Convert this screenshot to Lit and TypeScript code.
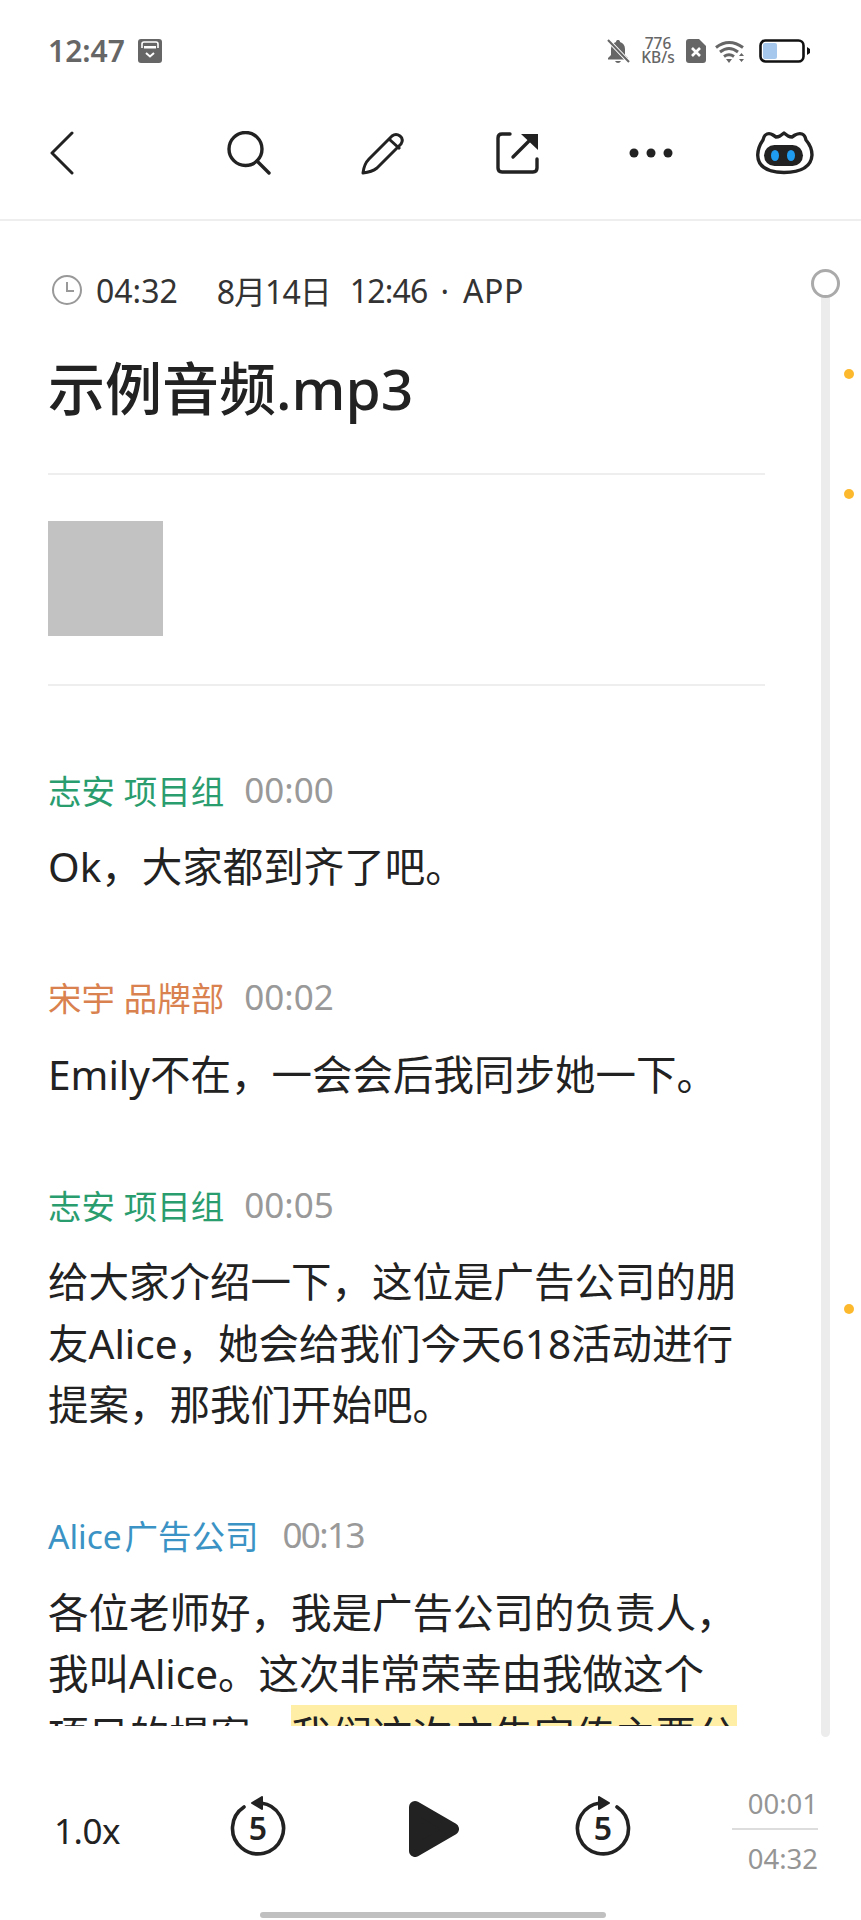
import {css, html, LitElement, svg} from "lit";
import {customElement} from "lit/decorators.js";

type Turn = {
  speaker: string
  time: string
  kind: string
  text: unknown
}

const TURNS: Turn[] = [
  {speaker: '志安 项目组', time: '00:00', kind: 'green', text: 'Ok，大家都到齐了吧。'},
  {speaker: '宋宇 品牌部', time: '00:02', kind: 'orange', text: 'Emily不在，一会会后我同步她一下。'},
  {
    speaker: '志安 项目组',
    time: '00:05',
    kind: 'green',
    text: html`给大家介绍一下，这位是广告公司的朋<br>友Alice，她会给我们今天618活动进行<br>提案，那我们开始吧。`,
  },
  {
    speaker: 'Alice 广告公司',
    time: '00:13',
    kind: 'blue',
    text: html`各位老师好，我是广告公司的负责人，<br>我叫Alice。这次非常荣幸由我做这个<br>项目的提案。<mark>我们这次广告宣传主要分</mark>`,
  },
]

const seekIcon = (flip: boolean) => svg`
  <g transform=${flip ? 'translate(56 0) scale(-1 1)' : 'translate(0 0)'}>
    <path d="M31 7A25.500 25.500 0 1 1 14 11" fill="none" stroke="#222" stroke-width="3.600" stroke-linecap="round"/>
    <path d="M22 7L32 1V13Z" fill="#222" stroke="#222" stroke-width="2" stroke-linejoin="round"/>
  </g>
`

@customElement('app-root')
export class AppRoot extends LitElement {

  static styles = css`
    :host {
      background: #fff;
      color: #222;
      display: block;
      font-family: "Noto Sans", "Noto Sans CJK SC", sans-serif;
      height: 1920px;
      overflow: hidden;
      position: relative;
      width: 861px;
    }

    svg {
      display: block;
    }

    .status {
      align-items: center;
      color: #666;
      display: flex;
      height: 101px;
      padding: 0 51px 0 48px;
    }

    .clock {
      font-size: 30px;
      font-weight: 600;
      line-height: 1;
      margin-right: 13px;
    }

    .status-right {
      align-items: center;
      display: flex;
      margin-left: auto;
    }

    .speed {
      font-size: 15.5px;
      font-weight: 500;
      line-height: 13.5px;
      margin: 0 11px 0 11px;
      text-align: center;
      width: 34px;
    }

    .toolbar {
      align-items: center;
      border-bottom: 2px solid #eee;
      box-sizing: border-box;
      display: grid;
      grid-template-columns: 182px repeat(5, 134px);
      height: 120px;
      padding-bottom: 14px;
    }

    .tool {
      display: flex;
      justify-content: center;
    }

    .back {
      justify-content: flex-start;
      padding-left: 50px;
    }

    .content {
      box-sizing: border-box;
      height: 1505px;
      overflow: hidden;
      padding: 0 96px 0 48px;
    }

    .meta {
      align-items: center;
      color: #333;
      display: flex;
      font-size: 32px;
      height: 40px;
      margin-top: 49px;
      padding-left: 4px;
      white-space: pre;
    }

    .meta svg {
      margin-right: 14px;
    }

    .date {
      letter-spacing: -1px;
      margin-left: 39px;
    }

    .hour {
      letter-spacing: -0.8px;
      margin-left: 19px;
    }

    .sep {
      margin-left: 13px;
    }

    .app {
      letter-spacing: 0.5px;
      margin-left: 14px;
    }

    .title {
      font-size: 57px;
      font-weight: 500;
      line-height: 76px;
      margin: 40px 0 0;
    }

    .rule {
      background: #eee;
      height: 2px;
    }

    .title + .rule {
      margin-top: 47px;
    }

    .thumb {
      background: #c2c2c2;
      height: 115px;
      margin: 46px 0 48px;
      width: 115px;
    }

    .turn {
      margin-top: 81px;
    }

    .turn + .turn {
      margin-top: 77px;
    }

    .speaker {
      align-items: center;
      display: flex;
      font-size: 33.5px;
      gap: 20px;
      height: 44px;
      white-space: pre;
    }

    .green .name {
      color: #2a9d6f;
    }

    .orange .name {
      color: #d9824f;
    }

    .blue .name {
      color: #3a93c4;
      word-spacing: -6px;
    }

    .time {
      color: #999;
      font-size: 35px;
    }

    .blue .time {
      letter-spacing: -1.6px;
      margin-left: 4px;
    }

    .text {
      font-size: 40.5px;
      line-height: 61.5px;
      margin-top: 25px;
      white-space: nowrap;
    }

    mark {
      background: #ffeea6;
      color: inherit;
      padding: 3px 0;
    }

    .track {
      background: #ececec;
      border-radius: 5px;
      bottom: 183px;
      position: absolute;
      right: 31px;
      top: 283px;
      width: 9px;
    }

    .knob {
      background: #fff;
      border: 3px solid #aaa;
      border-radius: 50%;
      box-sizing: border-box;
      height: 29px;
      left: 811px;
      position: absolute;
      top: 269px;
      width: 29px;
    }

    .mark-dot {
      background: #fdb92e;
      border-radius: 50%;
      height: 10px;
      left: 844px;
      position: absolute;
      width: 10px;
    }

    .player {
      align-items: center;
      box-sizing: border-box;
      display: grid;
      grid-template-columns: 182px 56px 123px 50px 116px 56px 1fr;
      height: 194px;
      padding: 12px 43px 0 48px;
    }

    .rate {
      font-size: 35px;
      letter-spacing: -0.5px;
      padding-left: 6px;
      padding-top: 3px;
    }

    .seek {
      margin-bottom: 6px;
      position: relative;
    }

    .seek span {
      font-size: 32px;
      font-weight: 600;
      left: 0;
      line-height: 1;
      position: absolute;
      right: 0;
      text-align: center;
      top: 16px;
    }

    .progress {
      color: #959595;
      font-size: 27.5px;
      justify-self: end;
      line-height: 1;
      padding-top: 4px;
      text-align: right;
      width: 86px;
    }

    .progress div:first-child {
      border-bottom: 2px solid #ddd;
      margin-bottom: 15px;
      padding-bottom: 11px;
    }

    .home {
      background: #c0c0c0;
      border-radius: 3px;
      height: 6px;
      left: 260px;
      position: absolute;
      top: 1912px;
      width: 346px;
    }
  `

  render() {
    return html`
      <div class="status">
        <span class="clock">12:47</span>
        <svg width="24" height="24" viewBox="0 0 24 24">
          <rect width="24" height="24" rx="3" fill="#666"/>
          <path d="M4 9V5q0-2 2-2h12q2 0 2 2v4" fill="none" stroke="#fff" stroke-width="1.6"/>
          <rect x="6" y="7" width="12" height="2.5" fill="#fff"/>
          <path d="M8 14l4 3.5 4-3.5" fill="none" stroke="#fff" stroke-width="2"/>
        </svg>
        <div class="status-right">
          <svg width="23" height="24" viewBox="0 0 23 24" fill="#666">
            <path d="M11 1c-1 0-2 .6-2 2-3 .8-5 3.5-5 7v6l-3 3v1.500h20V19l-3-3v-6c0-3.500-2-6.200-5-7 0-1.400-1-2-2-2z"/>
            <path d="M8 22h6q-1 2-3 2t-3-2z"/>
            <path d="M1 1l21 22" stroke="#fff" stroke-width="4"/>
            <path d="M1 1l21 22" stroke="#666" stroke-width="2"/>
          </svg>
          <div class="speed">776<br>KB/s</div>
          <svg width="20" height="24" viewBox="0 0 20 24">
            <path d="M3 0h10l7 7v14q0 3-3 3H3q-3 0-3-3V3q0-3 3-3z" fill="#666"/>
            <path d="M6 9l8 8M14 9l-8 8" stroke="#fff" stroke-width="2.600"/>
          </svg>
          <svg style="margin-left:9px" width="30" height="24" viewBox="0 0 30 24" fill="none" stroke="#666" stroke-width="3">
            <path d="M1 8.500q13-10 27 0M5 13q9-7 18 0M9 17.500q5-3.500 10 0"/>
            <path d="M11 20h6l-3 4z" fill="#666" stroke="none"/>
            <path d="M24 17l2.500-3 2.500 3zM24 20l2.500 3 2.500-3z" fill="#666" stroke="none"/>
          </svg>
          <svg style="margin-left:14px" width="51" height="24" viewBox="0 0 51 24">
            <rect x="1.500" y="1.500" width="43" height="21" rx="5" fill="#fff" stroke="#111" stroke-width="2.600"/>
            <rect x="4" y="4" width="14" height="16" rx="2" fill="#a5c8ec"/>
            <path d="M48 8l3 2v4l-3 2z" fill="#111"/>
          </svg>
        </div>
      </div>

      <div class="toolbar">
        <div class="tool back">
          <svg width="24" height="44" viewBox="0 0 24 44" fill="none" stroke="#222" stroke-width="3" stroke-linecap="round" stroke-linejoin="round">
            <path d="M22 2L2 22l20 20"/>
          </svg>
        </div>
        <div class="tool">
          <svg width="44" height="44" viewBox="0 0 44 44" fill="none" stroke="#222" stroke-width="3.400" stroke-linecap="round">
            <circle cx="18.500" cy="18" r="16.500"/>
            <path d="M30 30l12 12"/>
          </svg>
        </div>
        <div class="tool">
          <svg width="44" height="44" viewBox="0 0 44 44" fill="none" stroke="#222" stroke-width="3" stroke-linejoin="round">
            <path d="M2 42q1-9 6-14L31 5q4-3 8 0t1 8L16 37q-5 4-14 5z"/>
            <path d="M28 8l11 10"/>
          </svg>
        </div>
        <div class="tool">
          <svg width="44" height="44" viewBox="0 0 44 44" fill="none" stroke="#222" stroke-width="3.400" stroke-linecap="round">
            <path d="M15 3H7q-4 0-4 4v30q0 4 4 4h31q4 0 4-4v-9"/>
            <path d="M18 26L36 8"/>
            <path d="M26 3h17v16z" fill="#222" stroke="none"/>
          </svg>
        </div>
        <div class="tool">
          <svg width="44" height="12" viewBox="0 0 44 12" fill="#222">
            <circle cx="5" cy="6" r="4.500"/>
            <circle cx="22" cy="6" r="4.500"/>
            <circle cx="39" cy="6" r="4.500"/>
          </svg>
        </div>
        <div class="tool">
          <svg width="58" height="44" viewBox="0 0 58 44">
            <path d="M11 3Q14 2 17 4L20 6Q22 6 24 5L28 2 32 5Q34 6 36 6L39 4Q43 2 46 3 49 4 50 9 56 16 56 24 55 41 28 41.500 2 41 1.700 24 2 16 7 9 8 4 11 3Z" fill="#fff" stroke="#222" stroke-width="3.400" stroke-linejoin="round"/>
            <rect x="8" y="14" width="39" height="21" rx="10.500" fill="#222"/>
            <ellipse cx="19" cy="24.500" rx="4" ry="5.500" fill="#1f9bf0"/>
            <ellipse cx="35" cy="24.500" rx="4" ry="5.500" fill="#1f9bf0"/>
          </svg>
        </div>
      </div>

      <div class="content">
        <div class="meta">
          <svg width="30" height="30" viewBox="0 0 30 30" fill="none" stroke="#999" stroke-width="2">
            <circle cx="15" cy="15" r="14"/>
            <path d="M15 7v9h7"/>
          </svg>
          <span>04:32</span>
          <span class="date">8月14日</span>
          <span class="hour">12:46</span>
          <span class="sep">·</span>
          <span class="app">APP</span>
        </div>
        <h1 class="title">示例音频.mp3</h1>
        <div class="rule"></div>
        <div class="thumb"></div>
        <div class="rule"></div>
        ${TURNS.map((turn) => html`
          <div class="turn ${turn.kind}">
            <div class="speaker">
              <span class="name">${turn.speaker}</span>
              <span class="time">${turn.time}</span>
            </div>
            <div class="text">${turn.text}</div>
          </div>
        `)}
      </div>

      <div class="track"></div>
      <div class="knob"></div>
      ${[369, 489, 1304].map((top) => html`<div class="mark-dot" style="top: ${top}px"></div>`)}

      <div class="player">
        <div class="rate">1.0x</div>
        <div class="seek">
          <svg width="56" height="60" viewBox="0 0 56 60">${seekIcon(false)}</svg>
          <span>5</span>
        </div>
        <div></div>
        <svg width="50" height="56" viewBox="0 0 50 56">
          <path d="M6 6L44 28 6 50Z" fill="#222" stroke="#222" stroke-width="12" stroke-linejoin="round"/>
        </svg>
        <div></div>
        <div class="seek">
          <svg width="56" height="60" viewBox="0 0 56 60">${seekIcon(true)}</svg>
          <span>5</span>
        </div>
        <div class="progress">
          <div>00:01</div>
          <div>04:32</div>
        </div>
      </div>

      <div class="home"></div>
    `
  }
}
